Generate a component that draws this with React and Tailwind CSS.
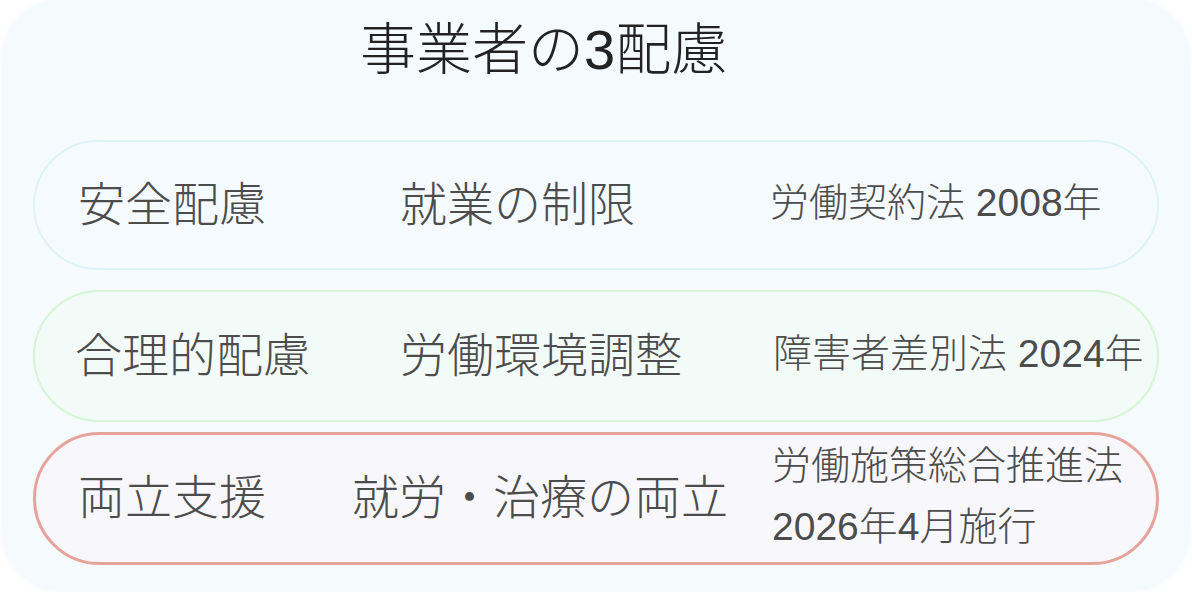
import React from 'react';

const font = { fontFamily: '"Noto Sans CJK JP", "Noto Sans", sans-serif' };
const mixed = { fontFamily: '"Liberation Sans", "Noto Sans CJK JP", sans-serif' };

const rows = [
  {
    name: '安全配慮',
    scope: '就業の制限',
    law: ['労働契約法 2008年'],
    pill: 'mt-[140px] h-[130px] border-2 border-[#dcf3f6] bg-[#f5fafe]',
    w1: 'w-[365px] pl-[43px]',
    w2: 'w-[370px]',
  },
  {
    name: '合理的配慮',
    scope: '労働環境調整',
    law: ['障害者差別法 2024年'],
    pill: 'mt-[20px] h-[132px] border-2 border-[#d6f5d6] bg-[#f3fbf9]',
    w1: 'w-[365px] pl-[40px]',
    w2: 'w-[373px]',
  },
  {
    name: '両立支援',
    scope: '就労・治療の両立',
    law: ['労働施策総合推進法', '2026年4月施行'],
    pill: 'mt-[10px] h-[133px] border-[3px] border-[#e6a399] bg-[#f8f7fb]',
    w1: 'w-[316px] pl-[42px]',
    w2: 'w-[420px]',
  },
];

const Row = ({ row }) => (
  <div className={`mx-[29px] flex items-center pb-[10px] rounded-full ${row.pill}`}>
    <div className={`${row.w1} shrink-0 text-[47px] leading-none font-light text-[#4c4c4c]`}>{row.name}</div>
    <div className={`${row.w2} shrink-0 text-[47px] leading-none font-light text-[#4c4c4c]`}>{row.scope}</div>
    <div
      className="mt-[5px] flex flex-col gap-[22px] text-[39px] leading-none font-light text-[#4c4c4c] whitespace-nowrap"
      style={mixed}
    >
      {row.law.map((l) => (
        <span key={l}>{l}</span>
      ))}
    </div>
  </div>
);

export default function App() {
  return (
    <div className="w-[1192px] h-[592px] bg-white overflow-hidden" style={font}>
      <div className="relative mx-[4px] h-[590px] rounded-[60px] bg-[#f5fafd] shadow-[0_0_10px_rgba(230,240,248,0.8)]">
        <h1
          className="absolute left-[356px] top-[22px] text-[56px] leading-none font-light text-[#222]"
          style={mixed}
        >
          事業者の3配慮
        </h1>
        <div className="flex flex-col">
          {rows.map((r) => (
            <Row key={r.name} row={r} />
          ))}
        </div>
      </div>
    </div>
  );
}
